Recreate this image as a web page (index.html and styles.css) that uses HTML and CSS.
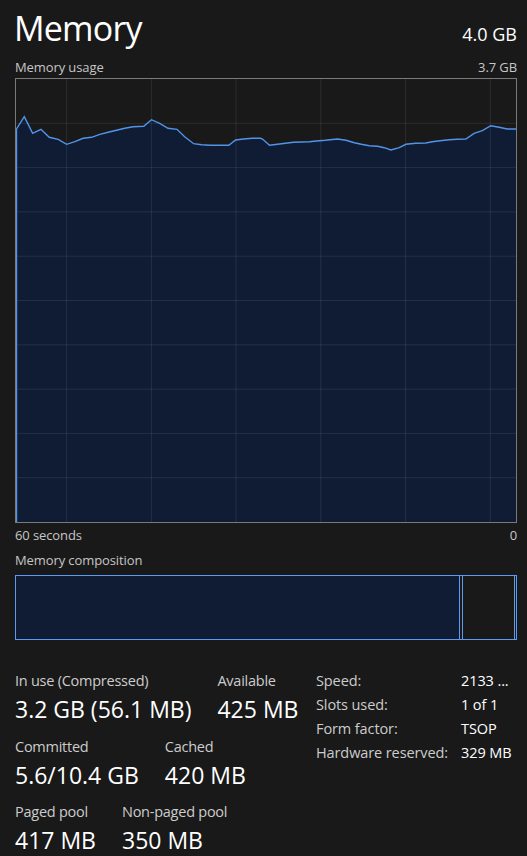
FILE: index.html
```html
<!DOCTYPE html>
<html>
    <head>
        <link rel="stylesheet" href="styles.css">
    </head>
    <body class="page">
        <div class="head">
            <h1 class="title">Memory</h1>
            <span class="total">4.0 GB</span>
        </div>
        <div class="caption usage-cap">
            <span>Memory usage</span>
            <span>3.7 GB</span>
        </div>
        <div class="graph">
            <svg class="plot" viewBox="0 0 501 443" preserveAspectRatio="none">
                <polygon class="area" points="0,443 0,50 8.3,37.7 16.7,54.3 25,50.3 33.3,58.3 42.3,60.3 50.7,65.3 59,62.7 67.3,59.3 75.7,58.3 84,55.3 92.3,53.3 100.7,51.3 109,49.3 117.3,47.7 128,47.3 135.7,40.7 144,44.3 152.3,49.3 161.3,50.3 169,57.7 178,64.7 186,65.7 194.7,66.3 213.3,66.3 220,61 228,60 236.7,59.3 245,59.3 247,60 254,66.3 262,65.3 270,64.3 278,63.3 286,63 294,62.7 300.7,62 310,61.3 322,60 330.7,61.3 339,63.7 346,65.3 354,66.7 362.3,67.3 369,68.7 375.7,71 384,68.7 390.7,65.3 400.7,64.3 410.7,64 417,62.7 425,61.7 434,60.7 442,60.3 450.7,60 459,54.3 467.3,51.7 475.7,46.7 484,48.3 492.3,50 501,50 501,443"/>
                <g class="grid">
                    <line x1="0" y1="44.3" x2="501" y2="44.3"/>
                    <line x1="0" y1="88.6" x2="501" y2="88.6"/>
                    <line x1="0" y1="132.9" x2="501" y2="132.9"/>
                    <line x1="0" y1="177.2" x2="501" y2="177.2"/>
                    <line x1="0" y1="221.5" x2="501" y2="221.5"/>
                    <line x1="0" y1="265.8" x2="501" y2="265.8"/>
                    <line x1="0" y1="310.1" x2="501" y2="310.1"/>
                    <line x1="0" y1="354.4" x2="501" y2="354.4"/>
                    <line x1="0" y1="398.7" x2="501" y2="398.7"/>
                    <line x1="50.7" y1="0" x2="50.7" y2="443"/>
                    <line x1="135.6" y1="0" x2="135.6" y2="443"/>
                    <line x1="220.5" y1="0" x2="220.5" y2="443"/>
                    <line x1="305.4" y1="0" x2="305.4" y2="443"/>
                    <line x1="390.3" y1="0" x2="390.3" y2="443"/>
                    <line x1="475.2" y1="0" x2="475.2" y2="443"/>
                </g>
                <polyline class="trace" points="0.5,443 0.5,50 8.3,37.7 16.7,54.3 25,50.3 33.3,58.3 42.3,60.3 50.7,65.3 59,62.7 67.3,59.3 75.7,58.3 84,55.3 92.3,53.3 100.7,51.3 109,49.3 117.3,47.7 128,47.3 135.7,40.7 144,44.3 152.3,49.3 161.3,50.3 169,57.7 178,64.7 186,65.7 194.7,66.3 213.3,66.3 220,61 228,60 236.7,59.3 245,59.3 247,60 254,66.3 262,65.3 270,64.3 278,63.3 286,63 294,62.7 300.7,62 310,61.3 322,60 330.7,61.3 339,63.7 346,65.3 354,66.7 362.3,67.3 369,68.7 375.7,71 384,68.7 390.7,65.3 400.7,64.3 410.7,64 417,62.7 425,61.7 434,60.7 442,60.3 450.7,60 459,54.3 467.3,51.7 475.7,46.7 484,48.3 492.3,50 501,50"/>
            </svg>
        </div>
        <div class="caption time-cap">
            <span>60 seconds</span>
            <span>0</span>
        </div>
        <div class="caption comp-cap">
            <span>Memory composition</span>
        </div>
        <div class="comp">
            <div class="seg in-use"></div>
            <div class="seg modified"></div>
            <div class="seg standby"></div>
            <div class="seg free"></div>
        </div>

        <div class="stats">
            <div class="stat-list">
                <div class="stat-row">
                    <div class="stat">
                        <div class="label">In use (Compressed)</div>
                        <div class="value">3.2 GB (56.1 MB)</div>
                    </div>
                    <div class="stat">
                        <div class="label">Available</div>
                        <div class="value">425 MB</div>
                    </div>
                </div>
                <div class="stat-row">
                    <div class="stat">
                        <div class="label">Committed</div>
                        <div class="value">5.6/10.4 GB</div>
                    </div>
                    <div class="stat">
                        <div class="label">Cached</div>
                        <div class="value">420 MB</div>
                    </div>
                </div>
                <div class="stat-row">
                    <div class="stat">
                        <div class="label">Paged pool</div>
                        <div class="value">417 MB</div>
                    </div>
                    <div class="stat">
                        <div class="label">Non-paged pool</div>
                        <div class="value">350 MB</div>
                    </div>
                </div>
            </div>
            <div class="specs">
                <span class="key">Speed:</span><span class="val">2133 ...</span>
                <span class="key">Slots used:</span><span class="val">1 of 1</span>
                <span class="key">Form factor:</span><span class="val">TSOP</span>
                <span class="key">Hardware reserved:</span><span class="val">329 MB</span>
            </div>
        </div>
    </body>
</html>
```

FILE: styles.css
```css
.page{
    margin: 0;
    padding: 0 10px 0 15px;
    background-color: #191919;
    color: #ffffff;
    font-family: "Segoe UI", "Open Sans", sans-serif;
}
.head{
    display: flex;
    justify-content: space-between;
    align-items: baseline;
    height: 35px;
    padding-top: 11px;
}
.title{
    margin: 0 0 0 -1px;
    font-size: 34px;
    line-height: 35px;
    letter-spacing: -0.8px;
    font-weight: normal;
}
.total{
    font-size: 18px;
    line-height: 20px;
}
.caption{
    display: flex;
    justify-content: space-between;
    font-size: 13px;
    line-height: 16px;
    letter-spacing: -0.1px;
    color: #c6c6c6;
}
.usage-cap{
    margin-top: 13px;
}
.time-cap{
    margin-top: 4px;
}
.comp-cap{
    margin-top: 9px;
}
.graph{
    margin-top: 3px;
    height: 445px;
    border: 1px solid #7a7a7a;
    box-sizing: border-box;
}
.plot{
    display: block;
    width: 100%;
    height: 100%;
}
.area{
    fill: #0f1c33;
}
.grid line{
    stroke: rgba(255, 255, 255, 0.09);
    stroke-width: 1;
}
.trace{
    fill: none;
    stroke: #5294ea;
    stroke-width: 1.4;
}
.comp{
    display: flex;
    margin-top: 7px;
    height: 65px;
    border: 1px solid #5a9cf5;
    box-sizing: border-box;
}
.seg{
    border-right: 1px solid #5a9cf5;
}
.in-use{
    width: 443px;
    background-color: #0f1c33;
}
.modified{
    width: 2px;
}
.standby{
    flex: 1;
}
.free{
    width: 1px;
    border-right: none;
}
.stats{
    display: flex;
    margin-top: 29px;
}
.stat-list{
    width: 301px;
    padding-top: 2px;
}
.stat-row{
    display: flex;
    gap: 26px;
    margin-bottom: 13.5px;
}
.label{
    font-size: 14.5px;
    line-height: 20px;
    letter-spacing: -0.25px;
    color: #cccccc;
}
.value{
    margin-top: 4px;
    font-size: 23px;
    line-height: 28px;
}
.specs{
    flex: 1;
    display: grid;
    grid-template-columns: 145px 1fr;
    align-content: start;
    font-size: 14.5px;
    line-height: 24px;
    letter-spacing: -0.1px;
}
.key{
    color: #cccccc;
}
.val{
    color: #ffffff;
}
```
